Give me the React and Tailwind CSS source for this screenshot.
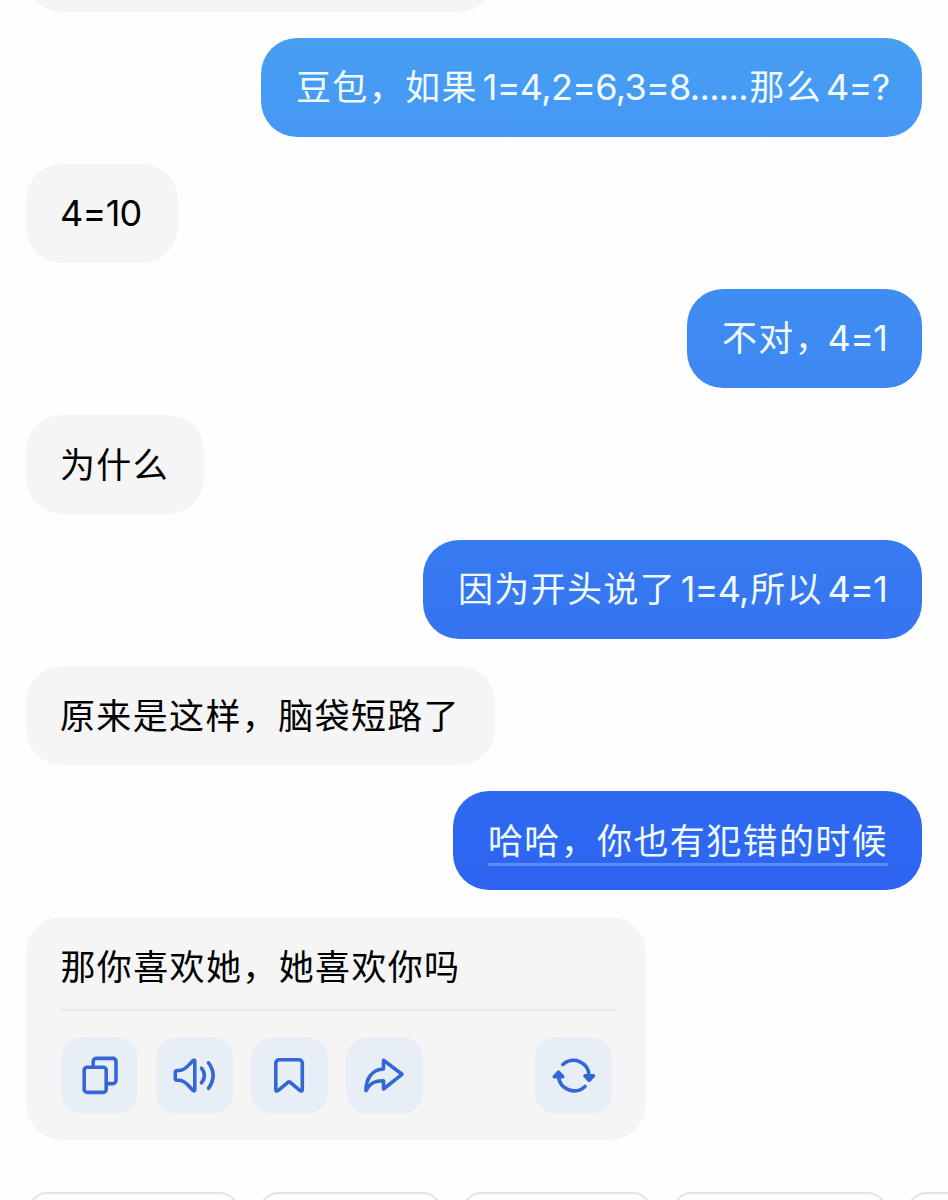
import React from "react";
import { clsx } from "clsx";

const messages = [
  { id: 1, from: "me", parts: ["豆包，如果", { latin: "1=4,2=6,3=8......", gap: "ml-[5px] mr-[1.5px]" }, "那么", { latin: "4=?", gap: "ml-[4px]" }], color: "bg-linear-to-b from-[#469ff1] to-[#4697f6]" },
  { id: 2, from: "bot", parts: [{ latin: "4=10" }], width: "w-[152px]" },
  { id: 3, from: "me", parts: ["不对，", { latin: "4=1", gap: "-ml-[3.5px]" }], color: "bg-linear-to-b from-[#3f8ef3] to-[#3f86f3]", width: "w-[235px]" },
  { id: 4, from: "bot", parts: ["为什么"], width: "w-[178px]" },
  { id: 5, from: "me", parts: ["因为开头说了", { latin: "1=4,", gap: "ml-[4.5px] mr-[1.5px]" }, "所以", { latin: "4=1", gap: "ml-[4.5px]" }], color: "bg-linear-to-b from-[#377bf1] to-[#3673f1]", width: "w-[499px]" },
  { id: 6, from: "bot", parts: ["原来是这样，脑袋短路了"], width: "w-[469px]" },
  { id: 7, from: "me", parts: ["哈哈，你也有犯错的时候"], color: "bg-linear-to-b from-[#2f69f0] to-[#2c64f1]", width: "w-[469px]", underline: true },
];

const MessageText = ({ parts }) =>
  parts.map((part, index) =>
    part.latin ? (
      <span
        key={index}
        className={clsx("text-[36px] tracking-[-0.7px] [font-family:Inter,'Liberation_Sans',sans-serif]", part.gap)}
      >
        {part.latin}
      </span>
    ) : (
      <span key={index}>{part}</span>
    )
  );

const Bubble = ({ message }) => {
  const mine = message.from === "me";
  return (
    <div
      className={clsx(
        "flex h-[99px] shrink-0 items-center rounded-[36px] px-[35px] whitespace-nowrap",
        mine ? "self-end text-[#f0fbff]" : "self-start bg-[#f5f5f5] pl-[34px] text-black",
        !message.underline && "pb-[3px]",
        message.color,
        message.width || "w-[661px]"
      )}
    >
      <p className={clsx("leading-[46px]", message.underline && "border-b-[3px] border-[#5c8ef7] pb-px leading-[45px]")}>
        <MessageText parts={message.parts} />
      </p>
    </div>
  );
};

const Icon = ({ children }) => (
  <svg
    viewBox="0 0 77 77"
    className="size-[77px]"
    fill="none"
    stroke="#3367d6"
    strokeWidth="3.6"
    strokeLinecap="round"
    strokeLinejoin="round"
  >
    {children}
  </svg>
);

const ActionButton = ({ label, className, children }) => (
  <button aria-label={label} className={clsx("size-[77px] rounded-[22px] bg-[#e8eef6]", className)}>
    <Icon>{children}</Icon>
  </button>
);

const AnswerCard = () => (
  <div className="h-[223px] w-[620px] shrink-0 self-start rounded-[36px] bg-[#f5f5f5] pr-[31px] pl-[34.5px]">
    <div className="flex h-[94.5px] items-center border-b-2 border-[#e8e8e8] pt-[4px]">
      <p className="leading-[46px] whitespace-nowrap">那你喜欢她，她喜欢你吗</p>
    </div>
    <div className="flex gap-[18px] pt-[26px] pr-[3.5px]">
      <ActionButton label="copy">
        <rect x="23.2" y="30.2" width="22" height="25.2" rx="3" />
        <path d="M32.2 30V24.4a3 3 0 0 1 3-3H52a3 3 0 0 1 3 3v19.2a3 3 0 0 1-3 3h-6.5" />
      </ActionButton>
      <ActionButton label="read aloud">
        <path d="M19.3 35.5a2 2 0 0 1 2-2h2.2C30 33.2 33 27 37.3 23.5Q38.8 22.5 38.8 24.5V52.5Q38.8 54.5 37.3 53.5C33 50 30 43.5 23.5 43.2h-2.2a2 2 0 0 1-2-2Z" />
        <path d="M45.5 31.2q6 7.3 0 14.6M52.5 25.8q9.2 12.8 0 25.6" />
      </ActionButton>
      <ActionButton label="save">
        <path d="M24.8 26a3.3 3.3 0 0 1 3.3-3.3H48a3.3 3.3 0 0 1 3.3 3.3V52.4q0 2.6-2.2 1.2L39.6 45.6q-1.5-1.3-3 0L27 53.6q-2.2 1.4-2.2-1.2Z" />
      </ActionButton>
      <ActionButton label="share">
        <path d="M37.5 23.2 56 37.3 37.5 52v-8.3C29.500 43.5 24.500 45.5 20 53.5 20 41.5 26 32.5 37.5 32Z" />
      </ActionButton>
      <ActionButton label="regenerate" className="ml-auto">
        <path d="M27.8 27.5A15.8 15.8 0 0 1 54.2 38.5M23.5 39.5A15.8 15.8 0 0 0 50 49.500" />
        <path d="M50 38.7h8.4l-4.2 4.500ZM19.300 39.700h8.400L23.500 35.200Z" fill="#3367d6" />
      </ActionButton>
    </div>
  </div>
);

const chips = ["w-[209px]", "w-[181px]", "w-[188px]", "w-[213px]", "w-[200px]"];

const App = () => {
  return (
    <main
      lang="zh-CN"
      className="flex h-[1200px] w-[948px] flex-col overflow-hidden bg-[#fefefe] text-[35px] tracking-[1.36px] [font-family:'Noto_Sans_CJK_SC',sans-serif]"
    >
      <div className="ml-[26px] h-[11.5px] w-[469px] shrink-0 overflow-hidden">
        <div className="-mt-[87px] h-[98.5px] rounded-[36px] bg-[#f5f5f5]" />
      </div>
      <div className="flex shrink-0 flex-col gap-[26.5px] pt-[26.5px] pr-[26px] pl-[26px]">
        {messages.map((message) => (
          <Bubble key={message.id} message={message} />
        ))}
        <AnswerCard />
      </div>
      {/* Suggested replies, only their top edge is in view */}
      <div className="mt-[52px] ml-[28.5px] flex shrink-0 gap-[22px]">
        {chips.map((width, index) => (
          <div key={index} className={clsx("h-[70px] shrink-0 rounded-[18px] border-2 border-[#e4e4e4]", width)} />
        ))}
      </div>
    </main>
  );
};

export default App;
